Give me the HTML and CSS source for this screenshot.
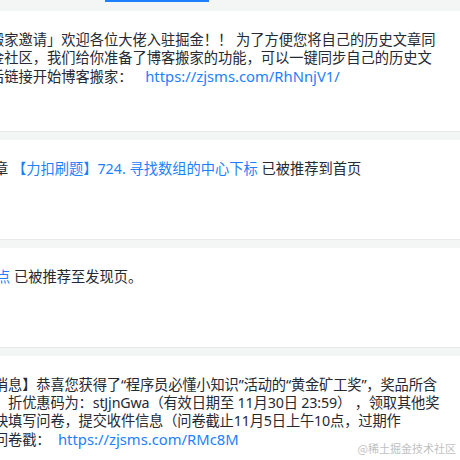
FILE: index.html
```html
<!DOCTYPE html>
<html lang="zh-CN">
<head>
<meta charset="utf-8">
<title>消息通知</title>
<link rel="stylesheet" href="styles.css">
</head>
<body>
<div class="page">
  <div class="tabs"><span class="tab-active"></span></div>
  <div class="list">
    <div class="card card-tall">
      <p class="msg msg-cut-lg">搬家邀请」欢迎各位大佬入驻掘金！！ 为了方便您将自己的历史文章同<br>金社区，我们给你准备了博客搬家的功能，可以一键同步自己的历史文<br>后链接开始博客搬家： <a class="link url url-gap-lg" href="#">https://zjsms.com/RhNnjV1/</a></p>
    </div>
    <div class="card">
      <p class="msg msg-cut-md">章 <a class="link" href="#">【力扣刷题】724. 寻找数组的中心下标</a> 已被推荐到首页</p>
    </div>
    <div class="card">
      <p class="msg msg-cut-sm"><a class="link" href="#">点</a> 已被推荐至发现页。</p>
    </div>
    <div class="card card-last">
      <p class="msg msg-cut-md msg-tight">消息】恭喜您获得了“程序员必懂小知识”活动的“黄金矿工奖”，奖品所含<br>，折优惠码为：stJjnGwa（有效日期至 11月30日 23:59） ，领取其他奖<br>快填写问卷，提交收件信息（问卷截止11月5日上午10点，过期作<br>问卷戳： <a class="link url url-gap-sm" href="#">https://zjsms.com/RMc8M</a></p>
    </div>
  </div>
  <div class="watermark">@稀土掘金技术社区</div>
</div>
</body>
</html>
```

FILE: styles.css
```css
html, body {
  margin: 0;
  padding: 0;
}
body {
  background: #f4f5f5;
  font-family: "Noto Sans", "Noto Sans CJK SC", sans-serif;
  color: #252933;
  overflow: hidden;
}
.page {
  position: relative;
  width: 460px;
  height: 460px;
  overflow: hidden;
}
.tabs {
  height: 11px;
  display: flex;
}
.tab-active {
  display: block;
  margin-left: 105px;
  width: 104px;
  height: 2px;
  background: #1e80ff;
}
.list {
  display: flex;
  flex-direction: column;
  gap: 8px;
}
.card {
  background: #fff;
  border-bottom: 1px solid #e8e9eb;
  box-sizing: border-box;
  min-height: 100px;
  padding: 20px 0 45px;
}
.card-last {
  padding-bottom: 60px;
}
.msg {
  margin: 0;
  font-size: 14.25px;
  line-height: 18px;
  white-space: nowrap;
}
.msg-tight {
  letter-spacing: -0.15px;
}
.msg-cut-lg { margin-left: -10px; }
.msg-cut-md { margin-left: -6px; }
.msg-cut-sm { margin-left: -4px; }
.link {
  color: #1e80ff;
  text-decoration: none;
}
.url {
  font-size: 14.8px;
  letter-spacing: 0;
}
.url-gap-lg {
  margin-left: 9px;
}
.url-gap-sm {
  margin-left: 4px;
}
.watermark {
  position: absolute;
  right: 4px;
  bottom: 4px;
  font-size: 11px;
  color: #bfc1c4;
  font-family: "Noto Sans CJK SC", sans-serif;
  text-shadow: 0 0 1px #fff;
}
```
